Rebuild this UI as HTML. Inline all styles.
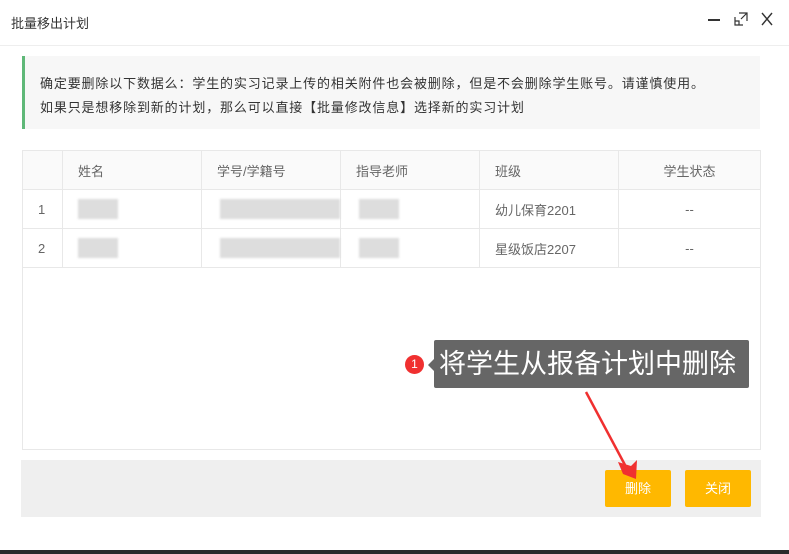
<!DOCTYPE html><html><head><meta charset="utf-8"><style>
*{margin:0;padding:0;box-sizing:border-box}
body{width:789px;height:554px;background:#fff;position:relative;overflow:hidden;font-family:"Liberation Sans","Noto Sans CJK SC",sans-serif;color:#333}
.a{position:absolute}
.t{font-size:13px;color:#555}
table{border-collapse:collapse;position:absolute;left:22px;top:150px;font-size:13px;color:#666}
td{border:1px solid #e8e8e8;height:39px;padding-left:15px}
tr.h td{background:#fafafa}
.blur{display:inline-block;height:20px;background:#ddd;vertical-align:middle;filter:blur(1px)}
</style></head><body>
<div class="a t" style="left:11px;top:13px;color:#333">批量移出计划</div>
<div class="a" style="left:708px;top:19px;width:12px;height:2px;background:#333"></div>
<svg class="a" style="left:733px;top:11px" width="16" height="16" viewBox="0 0 16 16" fill="none" stroke="#333" stroke-width="1.2"><path d="M2 6V14H10M6 2H14V10M14 2L8 8M2 10H6V14"/></svg>
<svg class="a" style="left:760px;top:12px" width="14" height="14" viewBox="0 0 14 14" stroke="#333" stroke-width="1.4"><path d="M2 1L12 13M12 1L2 13"/></svg>
<div class="a" style="left:0;top:45px;width:789px;height:1px;background:#eee"></div>
<div class="a" style="left:22px;top:56px;width:738px;height:73px;background:#f7f7f7;border-left:3px solid #5fb878"></div>
<div class="a t" style="left:40px;top:72px;font-size:13px;color:#333;line-height:24px;letter-spacing:0.85px;white-space:nowrap">确定要删除以下数据么：学生的实习记录上传的相关附件也会被删除，但是不会删除学生账号。请谨慎使用。<br>如果只是想移除到新的计划，那么可以直接【批量修改信息】选择新的实习计划</div>
<div class="a" style="left:22px;top:150px;width:739px;height:300px;border:1px solid #e8e8e8"></div>
<table>
<tr class="h"><td style="width:40px"></td><td style="width:139px">姓名</td><td style="width:139px">学号/学籍号</td><td style="width:139px">指导老师</td><td style="width:139px">班级</td><td style="width:142px;text-align:center;padding:0">学生状态</td></tr>
<tr><td>1</td><td><span class="blur" style="width:40px"></span></td><td style="padding-left:18px"><span class="blur" style="width:120px"></span></td><td style="padding-left:18px"><span class="blur" style="width:40px"></span></td><td>幼儿保育2201</td><td style="text-align:center;padding:0">--</td></tr>
<tr><td>2</td><td><span class="blur" style="width:40px"></span></td><td style="padding-left:18px"><span class="blur" style="width:120px"></span></td><td style="padding-left:18px"><span class="blur" style="width:40px"></span></td><td>星级饭店2207</td><td style="text-align:center;padding:0">--</td></tr>
</table>
<div class="a" style="left:21px;top:460px;width:740px;height:57px;background:#efefef"></div>
<div class="a" style="left:605px;top:470px;width:66px;height:37px;background:#ffb800;border-radius:2px;color:#fff;font-size:13px;text-align:center;line-height:37px">删除</div>
<div class="a" style="left:685px;top:470px;width:66px;height:37px;background:#ffb800;border-radius:2px;color:#fff;font-size:13px;text-align:center;line-height:37px">关闭</div>
<div class="a" style="left:0;top:550px;width:789px;height:4px;background:#2a2a2a"></div>
<div class="a" style="left:434px;top:340px;width:315px;height:48px;background:#666;border-radius:2px;color:#fff;font-size:27px;line-height:48px;padding-left:5px;white-space:nowrap">将学生从报备计划中删除</div>
<div class="a" style="left:428px;top:359px;width:0;height:0;border:6px solid transparent;border-right-color:#666;border-left:0"></div>
<div class="a" style="left:405px;top:355px;width:19px;height:19px;border-radius:50%;background:#f03030;color:#fff;font-size:12px;text-align:center;line-height:19px">1</div>
<svg class="a" style="left:0;top:0" width="789" height="554"><path d="M586 392L625 465" stroke="#f03030" stroke-width="2.5"/><path d="M623 474L636 479L637 460L631 466L618 462Z" fill="#f03030"/></svg>
</body></html>
